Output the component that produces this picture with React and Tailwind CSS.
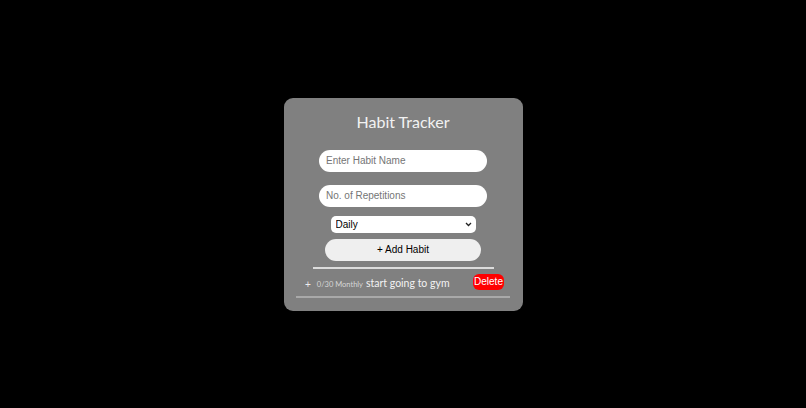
import React, { useState } from "react";

export default function App() {
  const [name, setName] = useState("");
  const [reps, setReps] = useState("");
  const [freq, setFreq] = useState("Daily");
  const [habits] = useState([{ id: 1, done: 0, total: 30, freq: "Monthly", name: "start going to gym" }]);

  return (
    <div className="w-full h-[408px] bg-black flex items-center justify-center">
      <div className="w-[239px] h-[213px] bg-[#808080] rounded-[9px] flex flex-col items-center pt-[11px]">
        <h1 className="text-[16px] leading-[26px] text-[#f2f2f2] font-['Lato',sans-serif]">Habit Tracker</h1>

        <input
          value={name}
          onChange={(e) => setName(e.target.value)}
          placeholder="Enter Habit Name"
          className="block mt-[15px] w-[168px] h-[22px] rounded-full bg-white px-[7px] text-[10px] text-black placeholder:text-[#757575] outline-none font-['Liberation_Sans',Arial,sans-serif]"
        />
        <input
          value={reps}
          onChange={(e) => setReps(e.target.value)}
          placeholder="No. of Repetitions"
          className="block mt-[13px] w-[168px] h-[22px] rounded-full bg-white px-[7px] text-[10px] text-black placeholder:text-[#757575] outline-none font-['Liberation_Sans',Arial,sans-serif]"
        />

        <div className="relative mt-[9px] w-[145px] h-[17px]">
          <select
            value={freq}
            onChange={(e) => setFreq(e.target.value)}
            className="block appearance-none w-full h-full rounded-[5px] bg-white pl-[5px] text-[10px] leading-[17px] text-black outline-none font-['Liberation_Sans',Arial,sans-serif]"
          >
            <option>Daily</option>
            <option>Weekly</option>
            <option>Monthly</option>
          </select>
          <svg className="absolute right-[4px] top-[6px] pointer-events-none" width="7" height="5" viewBox="0 0 7 5">
            <path d="M1 1l2.5 2.5L6 1" fill="none" stroke="#222" strokeWidth="1.3" />
          </svg>
        </div>

        <button className="mt-[6px] w-[156px] h-[22px] rounded-full bg-[#efefef] text-[10px] text-black font-['Liberation_Sans',Arial,sans-serif]">
          + Add Habit
        </button>

        <div className="mt-[6px] w-[181px] h-[2px] bg-[#dcdcdc]" />

        <ul className="w-[214px]">
          {habits.map((h) => (
            <li key={h.id} className="flex items-center h-[29px] pl-[9px] pr-[6px] border-b-2 border-[#a9a9a9]">
              <span className="mt-[4px] text-[10px] text-[#eeeeee] font-['Liberation_Sans',Arial,sans-serif]">+</span>
              <span className="ml-[6px] mt-[5px] text-[7.5px] text-[#d6d6d6] font-['Lato',sans-serif]">
                {h.done}/{h.total} {h.freq}
              </span>
              <span className="ml-[3px] mt-[4px] text-[10.5px] text-[#f2f2f2] font-['Lato',sans-serif]">{h.name}</span>
              <button className="ml-auto -mt-[1px] w-[31px] h-[16px] rounded-[6px] bg-[#ff0000] text-[10px] text-white font-['Liberation_Sans',Arial,sans-serif]">
                Delete
              </button>
            </li>
          ))}
        </ul>
      </div>
    </div>
  );
}
